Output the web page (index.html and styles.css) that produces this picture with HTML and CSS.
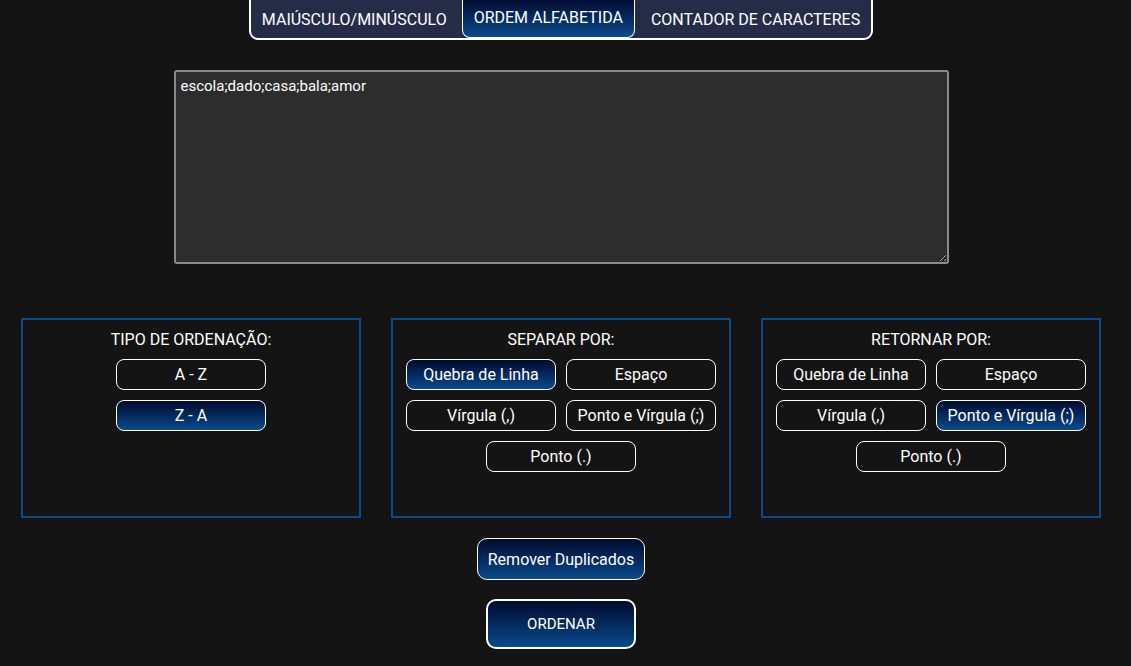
FILE: index.html
```html
<!DOCTYPE html>
<html lang="pt-BR">
<head>
<meta charset="utf-8">
<title>Ordem Alfabética</title>
<link rel="stylesheet" href="styles.css">
</head>
<body>
<div class="page">
  <nav class="tabs">
    <button class="tab">MAIÚSCULO/MINÚSCULO</button>
    <button class="tab active">ORDEM ALFABETIDA</button>
    <button class="tab">CONTADOR DE CARACTERES</button>
  </nav>

  <textarea class="input">escola;dado;casa;bala;amor</textarea>

  <section class="panels">
    <div class="panel">
      <h3 class="panel-title">TIPO DE ORDENAÇÃO:</h3>
      <div class="opts">
        <button class="opt">A - Z</button>
        <button class="opt sel">Z - A</button>
      </div>
    </div>
    <div class="panel">
      <h3 class="panel-title">SEPARAR POR:</h3>
      <div class="opts">
        <button class="opt sel">Quebra de Linha</button>
        <button class="opt">Espaço</button>
        <button class="opt">Vírgula (,)</button>
        <button class="opt">Ponto e Vírgula (;)</button>
        <button class="opt">Ponto (.)</button>
      </div>
    </div>
    <div class="panel">
      <h3 class="panel-title">RETORNAR POR:</h3>
      <div class="opts">
        <button class="opt">Quebra de Linha</button>
        <button class="opt">Espaço</button>
        <button class="opt">Vírgula (,)</button>
        <button class="opt sel">Ponto e Vírgula (;)</button>
        <button class="opt">Ponto (.)</button>
      </div>
    </div>
  </section>

  <button class="dup">Remover Duplicados</button>
  <button class="go">ORDENAR</button>
</div>
</body>
</html>
```

FILE: styles.css
```css
* { box-sizing: border-box; }
html, body {
  margin: 0;
  padding: 0;
  background: #141414;
  color: #fff;
  font-family: Roboto, "Liberation Sans", sans-serif;
}
.page {
  width: 1122px;
  display: flex;
  flex-direction: column;
  align-items: center;
}
button {
  font-family: Roboto, "Liberation Sans", sans-serif;
  color: #fff;
  cursor: pointer;
}
.tabs {
  display: flex;
  margin-top: -2px;
  height: 42px;
  border: 2px solid #fff;
  border-radius: 0 0 9px 9px;
  background: #252c47;
  overflow: hidden;
}
.tab {
  background: transparent;
  border: none;
  font-size: 16px;
  padding: 0 11px;
  height: 100%;
  line-height: 40px;
}
.tab:first-child { padding-left: 11px; padding-right: 15px; }
.tab:last-child { padding-left: 16px; padding-right: 11px; }
.tab.active {
  background: linear-gradient(#000a2e, #0a4a8c);
  border: 1px solid #fff;
  border-top: none;
  border-radius: 0 0 8px 8px;
  margin-top: -2px;
  height: calc(100% + 2px);
}
.input {
  margin-top: 30px;
  width: 775px;
  height: 194px;
  background: #2d2d2d;
  border: 2px solid #8a8a8a;
  border-radius: 3px;
  color: #fff;
  font-family: Roboto, "Liberation Sans", sans-serif;
  font-size: 15px;
  padding: 5px 5px;
  resize: vertical;
}
.panels {
  margin-top: 54px;
  display: flex;
  gap: 30px;
}
.panel {
  width: 340px;
  height: 200px;
  border: 2px solid #0c4a8b;
  padding-top: 10px;
}
.panel-title {
  margin: 0 0 10px;
  font-size: 16px;
  font-weight: 400;
  text-align: center;
  line-height: 19px;
}
.opts {
  display: flex;
  flex-wrap: wrap;
  justify-content: center;
  gap: 10px;
  padding: 0 12px;
}
.panel:first-child .opts {
  flex-direction: column;
  align-items: center;
}
.opt {
  width: 150px;
  height: 31px;
  background: #141414;
  border: 1px solid #fff;
  border-radius: 8px;
  font-size: 16px;
  padding: 0;
}
.opt.sel {
  background: linear-gradient(#000a2e, #0a4a8c);
}
.dup {
  margin-top: 20px;
  height: 42px;
  padding: 0 10px;
  background: linear-gradient(#000a2e, #0a4a8c);
  border: 1px solid #fff;
  border-radius: 10px;
  font-size: 16px;
}
.go {
  margin-top: 19px;
  width: 150px;
  height: 50px;
  background: linear-gradient(#000a2e, #0a4a8c);
  border: 2px solid #fff;
  border-radius: 10px;
  font-size: 15px;
}
```
